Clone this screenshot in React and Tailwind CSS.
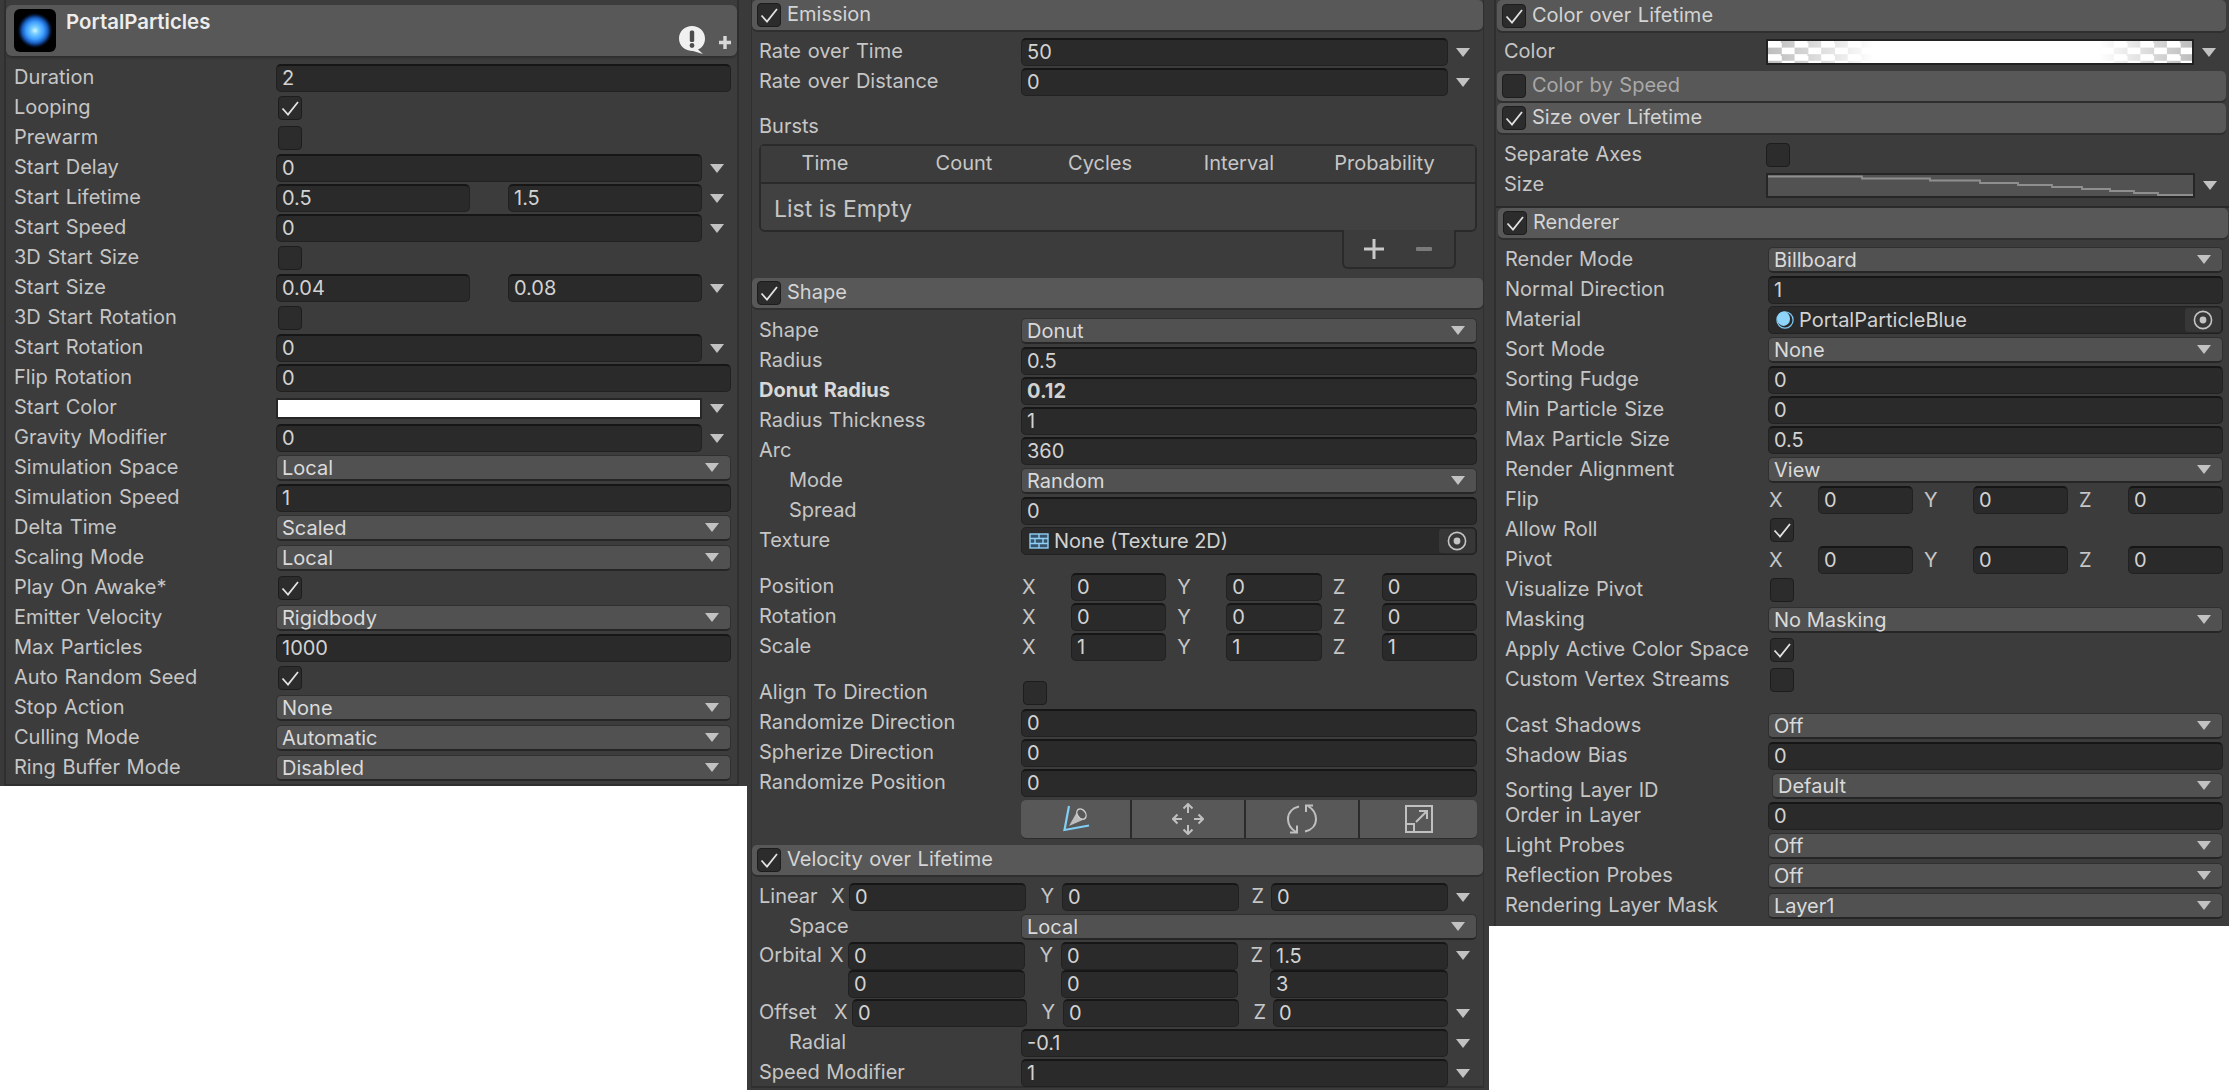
import React from "react";

const Arrow = ({ className = "" }) => (
  <svg width="14" height="9" viewBox="0 0 14 9" className={className}>
    <polygon points="0,0 14,0 7,9" fill="#c2c2c2" />
  </svg>
);

// slot to the right of a curve field
const ArrowSlot = () => (
  <div className="flex w-[29px] shrink-0 items-center justify-center">
    <Arrow />
  </div>
);

const Tick = () => (
  <svg width="24" height="24" viewBox="0 0 24 24">
    <polyline points="4.5,12.5 10,18.5 20,6" fill="none" stroke="#e2e2e2" strokeWidth="1.8" />
  </svg>
);

const Checkbox = ({ checked }) => (
  <div className="h-[24px] w-[24px] shrink-0 rounded-[4px] border border-[#1d1d1d] bg-[#2c2c2c]">
    {checked && <div className="-m-px"><Tick /></div>}
  </div>
);

const Field = ({ value, bold, className = "grow" }) => (
  <div
    className={`flex h-[28px] min-w-0 items-center rounded-[5px] border border-[#212121] border-t-2 border-t-[#161616] bg-[#2a2a2a] pb-[1px] pl-[5px] text-[20px] text-[#d2d2d2] ${bold ? "font-bold" : ""} ${className}`}
  >
    {value}
  </div>
);

const Dropdown = ({ value, className = "grow" }) => (
  <div
    className={`flex h-[26px] items-center justify-between rounded-[5px] border border-[#303030] border-b-2 border-b-[#262626] bg-[#515151] pl-[5px] pr-[11px] text-[20px] text-[#dadada] ${className}`}
  >
    {value}
    <Arrow />
  </div>
);

const Row = ({ label, bold, indent, lw = "w-[262px]", className = "h-[30px]", labelClass = "", children }) => (
  <div className={`flex items-center ${className}`}>
    <span
      className={`shrink-0 whitespace-nowrap pb-[2px] text-[20px] [word-spacing:1px] ${lw} ${bold ? "font-bold text-[#d8d8d8]" : "text-[#c6c6c6]"} ${indent ? "pl-[30px]" : ""} ${labelClass}`}
    >
      {label}
    </span>
    {children}
  </div>
);

const CurveRow = ({ label, values, ...rest }) => (
  <Row label={label} {...rest}>
    {values.length === 1 ? (
      <Field value={values[0]} />
    ) : (
      <div className="flex grow justify-between">
        <Field value={values[0]} className="w-[194px]" />
        <Field value={values[1]} className="w-[194px]" />
      </div>
    )}
    <ArrowSlot />
  </Row>
);

const Check = ({ label, checked, ...rest }) => (
  <Row label={label} {...rest}>
    <div className="pl-[2px]">
      <Checkbox checked={checked} />
    </div>
  </Row>
);

const Vec = ({ label, values, ...rest }) => (
  <Row label={label} {...rest}>
    <div className="grid grow grid-cols-3 gap-[10px]">
      {["X", "Y", "Z"].map((axis, i) => (
        <div key={axis} className="flex items-center">
          <span className="w-[50px] shrink-0 pl-[1px] text-[20px] text-[#c6c6c6]">{axis}</span>
          <Field value={values[i]} />
        </div>
      ))}
    </div>
  </Row>
);

// Linear / Orbital / Offset rows: inputs right after the axis letter
const XYZ = ({ label, values, xw, yw, zw, gapX, gapY, gapZ, h = "h-[30px]", hideAxis }) => (
  <div className={`flex items-center ${h}`}>
    <span className="w-[76px] shrink-0 whitespace-nowrap pb-[2px] text-[20px] text-[#c6c6c6]">{label}</span>
    <span className={`shrink-0 overflow-visible whitespace-nowrap pb-[2px] text-right text-[20px] text-[#c6c6c6] ${gapX} ${hideAxis ? "invisible" : ""}`}>
      <span className="-ml-[10px] inline-block w-[18px] pr-[5px]">X</span>
    </span>
    <Field value={values[0]} className={xw} />
    <span className={`shrink-0 pb-[2px] pr-[8px] text-right text-[20px] text-[#c6c6c6] ${gapY} ${hideAxis ? "invisible" : ""}`}>Y</span>
    <Field value={values[1]} className={yw} />
    <span className={`shrink-0 pb-[2px] pr-[7px] text-right text-[20px] text-[#c6c6c6] ${gapZ} ${hideAxis ? "invisible" : ""}`}>Z</span>
    <Field value={values[2]} className={zw} />
    {hideAxis ? <div className="w-[29px]" /> : <ArrowSlot />}
  </div>
);

const PickerDot = () => (
  <div className="flex h-[24px] w-[36px] items-center justify-center rounded-[3px] bg-[#373737]">
    <svg width="22" height="22" viewBox="0 0 22 22">
      <circle cx="11" cy="11" r="8.6" fill="none" stroke="#c4c4c4" strokeWidth="1.6" />
      <circle cx="11" cy="11" r="3.4" fill="#c4c4c4" />
    </svg>
  </div>
);

const ObjectField = ({ icon, value }) => (
  <div className="flex h-[28px] grow items-center justify-between rounded-[5px] border border-[#212121] bg-[#2a2a2a] pl-[7px] pr-[1px] text-[20px] text-[#d2d2d2]">
    <span className="flex items-center gap-[5px]">
      {icon}
      {value}
    </span>
    <PickerDot />
  </div>
);

const Header = ({ label, checked, dim, className = "" }) => (
  <div
    className={`flex h-[30px] items-center gap-[6px] rounded-[5px] bg-[#585858] pl-[5px] shadow-[0_2px_0_#2f2f2f] ${className}`}
  >
    <Checkbox checked={checked} />
    <span className={`pb-[2px] text-[20px] [word-spacing:1px] ${dim ? "text-[#a9a9a9]" : "text-[#d4d4d4]"}`}>{label}</span>
  </div>
);

const TextureIcon = () => (
  <svg width="20" height="16" viewBox="0 0 20 16">
    <rect x="1" y="1" width="18" height="14" fill="#37536b" stroke="#8fd0f5" strokeWidth="1.4" />
    <path d="M1 5.5H19M1 10.5H19M10 1V5.5M6 5.5V10.5M14 5.5V10.5M10 10.5V15" stroke="#8fd0f5" strokeWidth="1.4" fill="none" />
  </svg>
);

const MaterialIcon = () => (
  <svg width="18" height="22" viewBox="0 0 20 22">
    <circle cx="10" cy="11" r="9" fill="#2a2a2a" stroke="#7cc8f2" strokeWidth="1.4" />
    <ellipse cx="8.4" cy="9.6" rx="7.2" ry="8" fill="#8fd4fa" />
  </svg>
);

const ShapeTools = () => (
  <div className="flex h-[38px] overflow-hidden rounded-[5px] bg-[#585858] shadow-[0_1px_0_#2c2c2c]">
    <div className="flex w-[111px] items-center justify-center border-r-2 border-[#2b2b2b]">
      <svg width="28" height="28" viewBox="0 0 28 28" fill="none">
        <path d="M7 1L2.5 25L27 20.5" stroke="#82cff6" strokeWidth="2.2" />
        <polygon points="7,21 16,5 23,14" fill="#bdbdbd" />
        <ellipse cx="19.5" cy="9" rx="4" ry="5.6" transform="rotate(-35 19.5 9)" fill="#585858" stroke="#cfcfcf" strokeWidth="1.4" />
      </svg>
    </div>
    <div className="flex w-[114px] items-center justify-center border-r-2 border-[#2b2b2b]">
      <svg width="32" height="32" viewBox="0 0 32 32" fill="none" stroke="#c0c0c0" strokeWidth="2">
        <path d="M16 1V10M16 22V31M1 16H10M22 16H31" />
        <path d="M11.5 5.5L16 1L20.5 5.5M11.5 26.5L16 31L20.5 26.5M5.5 11.5L1 16L5.5 20.5M26.5 11.5L31 16L26.5 20.5" />
      </svg>
    </div>
    <div className="flex w-[114px] items-center justify-center border-r-2 border-[#2b2b2b]">
      <svg width="30" height="30" viewBox="0 0 30 30" fill="none" stroke="#c0c0c0" strokeWidth="2">
        <path d="M12 2.5C5 4 1 9 1 15C1 20 4 25 9 28" />
        <path d="M18 27.5C25 26 29 21 29 15C29 10 26 5 21 2" />
        <path d="M3 28.5H10V21.5M19 8V1.5H26" />
      </svg>
    </div>
    <div className="flex grow items-center justify-center">
      <svg width="28" height="28" viewBox="0 0 28 28" fill="none" stroke="#c0c0c0" strokeWidth="2">
        <rect x="1" y="1" width="26" height="26" />
        <rect x="1" y="19" width="8" height="8" />
        <path d="M11 17L22 6M14 6H22V14" />
      </svg>
    </div>
  </div>
);

const GradientBar = () => (
  <div className="h-[26px] grow border-2 border-[#222222] bg-[repeating-conic-gradient(#bdbdbd_0_25%,#ffffff_0_50%)] bg-[length:26.6px_13.2px]">
    <div className="h-full bg-[linear-gradient(90deg,#ffffff00_0%,#ffffff_25%,#ffffff_78%,#ffffff00_100%)]" />
  </div>
);

const CurveBar = () => (
  <div className="h-[25px] grow border-2 border-[#262626] bg-[#525252]">
    <svg width="425" height="21" viewBox="0 0 425 21" className="block" fill="none">
      <path
        d="M0 1.5H94V3.5H162V5.5H212V8H250V10H284V12H314V14H342V16H366V18H390V20H425"
        stroke="#8f8f8f"
        strokeWidth="1.8"
      />
    </svg>
  </div>
);

const Bursts = () => (
  <div className="mt-[2px]">
    <div className="h-[88px] rounded-[6px] border-2 border-[#2a2a2a] bg-[#414141]">
      <div className="h-[38px] border-b-2 border-[#2a2a2a] bg-[#3c3c3c] text-[20px] text-[#c6c6c6]">
        <div className="grid h-full grid-cols-[128px_150px_122px_156px_135px] items-center pb-[2px] text-center">
          <span>Time</span>
          <span>Count</span>
          <span>Cycles</span>
          <span>Interval</span>
          <span>Probability</span>
        </div>
      </div>
      <div className="pl-[13px] pt-[8px] text-[23px] text-[#c6c6c6]">List is Empty</div>
    </div>
    <div className="ml-auto mr-[21px] -mt-[2px] flex h-[39px] w-[114px] items-center rounded-b-[6px] border-2 border-t-0 border-[#2a2a2a] bg-[#3c3c3c] pl-[20px]">
      <svg width="20" height="20" viewBox="0 0 20 20">
        <path d="M10 0V20M0 10H20" stroke="#c9c9c9" strokeWidth="3" />
      </svg>
      <svg width="16" height="4" viewBox="0 0 16 4" className="ml-[32px]">
        <rect width="16" height="4" rx="1" fill="#7a7a7a" />
      </svg>
    </div>
  </div>
);

export default function App() {
  return (
    <div className="flex h-[1090px] w-[2229px] items-start overflow-hidden bg-white font-[Inter,sans-serif]">
      {/* Main module */}
      <div className="h-[786px] w-[747px] shrink-0 bg-[#3a3a3a] pl-[4px] pr-[8px]">
        <div className="h-full border-x-2 border-b-2 border-[#2f2f2f] bg-[#3c3c3c] pt-[5px]">
          <div className="flex h-[51px] rounded-[6px] bg-[#585858] pl-[8px] shadow-[0_2px_2px_#2f2f2f]">
            <div className="mt-[4px] h-[43px] w-[42px] rounded-[6px] bg-[radial-gradient(circle_at_center,#d4f6ff_0%,#7ad0ff_12%,#3c9bff_30%,#1a5fc0_42%,#04183a_52%,#000000_58%)]" />
            <span className="pl-[10px] pt-[2px] text-[20.4px] font-semibold text-[#ededed]">PortalParticles</span>
            <div className="ml-auto flex items-end pb-[2px] pr-[6px]">
              <svg width="26" height="28" viewBox="0 0 26 28">
                <path d="M13 0C20 0 26 5 26 12.5C26 18 23 22 19 23.5L24 28L14 25C6 25 0 20 0 12.5C0 5 6 0 13 0Z" fill="#f0f0f0" />
                <rect x="10.8" y="4.5" width="4.4" height="11.5" rx="1.5" fill="#4d4d4d" />
                <circle cx="13" cy="19.5" r="2.4" fill="#4d4d4d" />
              </svg>
              <svg width="12" height="13" viewBox="0 0 12 13" className="mb-[5px] ml-[14px]">
                <path d="M6 0V13M0 6.5H12" stroke="#d8d8d8" strokeWidth="3.4" />
              </svg>
            </div>
          </div>
          <div className="pl-[8px] pr-[6px] pt-[7px]">
            <Row label="Duration"><Field value="2" /></Row>
            <Check label="Looping" checked />
            <Check label="Prewarm" />
            <CurveRow label="Start Delay" values={["0"]} />
            <CurveRow label="Start Lifetime" values={["0.5", "1.5"]} />
            <CurveRow label="Start Speed" values={["0"]} />
            <Check label="3D Start Size" />
            <CurveRow label="Start Size" values={["0.04", "0.08"]} />
            <Check label="3D Start Rotation" />
            <CurveRow label="Start Rotation" values={["0"]} />
            <Row label="Flip Rotation"><Field value="0" /></Row>
            <Row label="Start Color">
              <div className="h-[21px] grow border-2 border-[#262626] bg-white" />
              <ArrowSlot />
            </Row>
            <CurveRow label="Gravity Modifier" values={["0"]} />
            <Row label="Simulation Space"><Dropdown value="Local" /></Row>
            <Row label="Simulation Speed"><Field value="1" /></Row>
            <Row label="Delta Time"><Dropdown value="Scaled" /></Row>
            <Row label="Scaling Mode"><Dropdown value="Local" /></Row>
            <Check label="Play On Awake*" checked />
            <Row label="Emitter Velocity"><Dropdown value="Rigidbody" /></Row>
            <Row label="Max Particles"><Field value="1000" /></Row>
            <Check label="Auto Random Seed" checked />
            <Row label="Stop Action"><Dropdown value="None" /></Row>
            <Row label="Culling Mode"><Dropdown value="Automatic" /></Row>
            <Row label="Ring Buffer Mode"><Dropdown value="Disabled" /></Row>
          </div>
        </div>
      </div>

      {/* Emission, Shape, Velocity */}
      <div className="h-[1090px] w-[742px] shrink-0 bg-[#3a3a3a] pl-[4px] pr-[5px]">
        <div className="h-[1088px] border-x border-b-2 border-[#2f2f2f] bg-[#3c3c3c]">
          <Header label="Emission" checked className="h-[29px]" />
          <div className="pl-[7px] pr-[6px] pt-[7px]">
            <CurveRow label="Rate over Time" values={["50"]} />
            <CurveRow label="Rate over Distance" values={["0"]} />
            <Row label="Bursts" className="mt-[15px] h-[30px]" />
            <Bursts />
          </div>
          <Header label="Shape" checked className="mt-[9px] h-[29px]" />
          <div className="pl-[7px] pr-[6px] pt-[8px]">
            <Row label="Shape"><Dropdown value="Donut" /></Row>
            <Row label="Radius"><Field value="0.5" /></Row>
            <Row label="Donut Radius" bold><Field value="0.12" bold /></Row>
            <Row label="Radius Thickness"><Field value="1" /></Row>
            <Row label="Arc"><Field value="360" /></Row>
            <Row label="Mode" indent><Dropdown value="Random" /></Row>
            <Row label="Spread" indent><Field value="0" /></Row>
            <Row label="Texture"><ObjectField icon={<TextureIcon />} value="None (Texture 2D)" /></Row>
            <Vec label="Position" values={["0", "0", "0"]} className="mt-[16px] h-[30px]" />
            <Vec label="Rotation" values={["0", "0", "0"]} />
            <Vec label="Scale" values={["1", "1", "1"]} />
            <Check label="Align To Direction" className="mt-[16px] h-[30px]" />
            <Row label="Randomize Direction"><Field value="0" /></Row>
            <Row label="Spherize Direction"><Field value="0" /></Row>
            <Row label="Randomize Position"><Field value="0" /></Row>
            <div className="pl-[262px] pt-[2px]"><ShapeTools /></div>
          </div>
          <Header label="Velocity over Lifetime" checked className="mt-[7px]" />
          <div className="pl-[7px] pr-[6px] pt-[7px]">
            <XYZ label="Linear" values={["0", "0", "0"]} gapX="w-[14px]" xw="w-[177px]" gapY="w-[36px]" yw="w-[177px]" gapZ="w-[32px]" zw="w-[177px]" />
            <Row label="Space" indent><Dropdown value="Local" /></Row>
            <XYZ label="Orbital" h="h-[27px]" values={["0", "0", "1.5"]} gapX="w-[13px]" xw="w-[177px]" gapY="w-[36px]" yw="w-[177px]" gapZ="w-[32px]" zw="w-[178px]" />
            <XYZ label="" h="h-[29px]" hideAxis values={["0", "0", "3"]} gapX="w-[13px]" xw="w-[177px]" gapY="w-[36px]" yw="w-[177px]" gapZ="w-[32px]" zw="w-[178px]" />
            <XYZ label="Offset" values={["0", "0", "0"]} gapX="w-[17px]" xw="w-[175px]" gapY="w-[36px]" yw="w-[176px]" gapZ="w-[34px]" zw="w-[175px]" />
            <CurveRow label="Radial" indent values={["-0.1"]} />
            <CurveRow label="Speed Modifier" values={["1"]} />
          </div>
        </div>
      </div>

      {/* Color, Size, Renderer */}
      <div className="h-[926px] w-[740px] shrink-0 bg-[#3a3a3a] pl-[5px]">
        <div className="h-full border-l-2 border-[#2f2f2f] bg-[#3c3c3c]">
          <div className="pl-[1px] pr-[3px]">
            <Header label="Color over Lifetime" checked className="h-[31px] pl-[4px]" />
          </div>
          <div className="pl-[8px] pr-[6px] pt-[6px]">
            <Row label="Color" className="h-[30px]">
              <GradientBar />
              <ArrowSlot />
            </Row>
          </div>
          <div className="pl-[1px] pr-[3px] pt-[4px]">
            <Header label="Color by Speed" dim className="pl-[4px]" />
            <Header label="Size over Lifetime" checked className="mt-[2px] pl-[4px]" />
          </div>
          <div className="pl-[8px] pr-[6px] pt-[7px]">
            <Row label="Separate Axes" className="h-[30px]">
              <Checkbox />
            </Row>
            <Row label="Size" className="h-[30px]">
              <CurveBar />
              <ArrowSlot />
            </Row>
          </div>
          <div className="mt-[6px] border-t-2 border-[#2a2a2a] pl-[2px] pr-[1px]">
            <Header label="Renderer" checked className="h-[30px]" />
          </div>
          <div className="pl-[9px] pr-[6px] pt-[7px]">
            <Row lw="w-[263px]" label="Render Mode"><Dropdown value="Billboard" /></Row>
            <Row lw="w-[263px]" label="Normal Direction"><Field value="1" /></Row>
            <Row lw="w-[263px]" label="Material"><ObjectField icon={<MaterialIcon />} value="PortalParticleBlue" /></Row>
            <Row lw="w-[263px]" label="Sort Mode"><Dropdown value="None" /></Row>
            <Row lw="w-[263px]" label="Sorting Fudge"><Field value="0" /></Row>
            <Row lw="w-[263px]" label="Min Particle Size"><Field value="0" /></Row>
            <Row lw="w-[263px]" label="Max Particle Size"><Field value="0.5" /></Row>
            <Row lw="w-[263px]" label="Render Alignment"><Dropdown value="View" /></Row>
            <Vec lw="w-[263px]" label="Flip" values={["0", "0", "0"]} />
            <Check lw="w-[263px]" label="Allow Roll" checked />
            <Vec lw="w-[263px]" label="Pivot" values={["0", "0", "0"]} />
            <Check lw="w-[263px]" label="Visualize Pivot" />
            <Row lw="w-[263px]" label="Masking"><Dropdown value="No Masking" /></Row>
            <Check lw="w-[263px]" label="Apply Active Color Space" checked />
            <Check lw="w-[263px]" label="Custom Vertex Streams" />
            <Row lw="w-[263px]" label="Cast Shadows" className="mt-[16px] h-[30px]"><Dropdown value="Off" /></Row>
            <Row lw="w-[263px]" label="Shadow Bias"><Field value="0" /></Row>
            <Row lw="w-[267px]" label="Sorting Layer ID" labelClass="pt-[10px]"><Dropdown value="Default" /></Row>
            <Row lw="w-[263px]" label="Order in Layer"><Field value="0" /></Row>
            <Row lw="w-[263px]" label="Light Probes"><Dropdown value="Off" /></Row>
            <Row lw="w-[263px]" label="Reflection Probes"><Dropdown value="Off" /></Row>
            <Row lw="w-[263px]" label="Rendering Layer Mask"><Dropdown value="Layer1" /></Row>
          </div>
        </div>
      </div>
    </div>
  );
}
